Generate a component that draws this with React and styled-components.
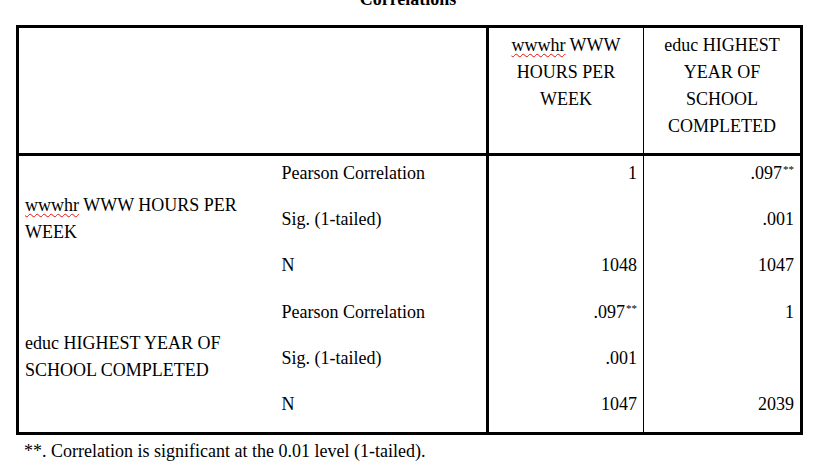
import React from 'react';
import styled, { createGlobalStyle } from 'styled-components';

const GlobalStyle = createGlobalStyle`
  html, body {
    margin: 0;
    padding: 0;
    background: #fff;
    overflow: hidden;
  }
  body {
    font-family: 'Liberation Serif', 'Times New Roman', serif;
    font-size: 18px;
    color: #000;
  }
`;

const Page = styled.div`
  width: 784px;
  margin-left: 16px;
  font-family: 'Liberation Serif', 'Times New Roman', serif;
`;

const Title = styled.div`
  margin: -11px 0 16px;
  line-height: 20px;
  font-weight: bold;
  text-align: center;
`;

const Table = styled.table`
  width: 784px;
  border-collapse: collapse;
  table-layout: fixed;
  border: 3px solid #000;
  font-family: inherit;
  font-size: 18px;
  line-height: 27px;
`;

const HeadRow = styled.tr`
  height: 128px;
`;

const BodyRow = styled.tr`
  height: 46.5px;
`;

const Cell = styled.td`
  padding: 0 6px 10px;
  vertical-align: middle;
  text-align: ${(p) => p.$align || 'left'};
  border-left: ${(p) => (p.$thickLeft ? '3px solid #000' : 'none')};
  border-right: ${(p) => (p.$thinRight ? '1px solid #000' : 'none')};
`;

const HeadCell = styled(Cell)`
  vertical-align: top;
  padding: 4px 6px 0;
  text-align: center;
  border-bottom: 3px solid #000;
`;

const LabelCell = styled(Cell)`
  padding-bottom: 12px;
`;

const SpellFlag = styled.span`
  text-decoration: underline wavy #e01010;
  text-decoration-thickness: 1px;
  text-underline-offset: 2px;
`;

const Sup = styled.sup`
  font-size: 11px;
  line-height: 0;
  vertical-align: 6px;
  margin-left: 1px;
`;

const Footnote = styled.div`
  margin: 6px 0 0 8px;
  line-height: 20px;
`;

const groups = [
  {
    label: (
      <>
        <SpellFlag>wwwhr</SpellFlag> WWW HOURS PER WEEK
      </>
    ),
    rows: [
      ['Pearson Correlation', '1', '.097', false, true],
      ['Sig. (1-tailed)', '', '.001'],
      ['N', '1048', '1047'],
    ],
  },
  {
    label: 'educ HIGHEST YEAR OF SCHOOL COMPLETED',
    rows: [
      ['Pearson Correlation', '.097', '1', true, false],
      ['Sig. (1-tailed)', '.001', ''],
      ['N', '1047', '2039'],
    ],
  },
];

export default function App() {
  return (
    <Page>
      <GlobalStyle />
      <Title>Correlations</Title>
      <Table>
        <colgroup>
          <col style={{ width: 258 }} />
          <col style={{ width: 212 }} />
          <col style={{ width: 156 }} />
          <col style={{ width: 158 }} />
        </colgroup>
        <thead>
          <HeadRow>
            <HeadCell colSpan={2} />
            <HeadCell $thickLeft $thinRight>
              <SpellFlag>wwwhr</SpellFlag> WWW HOURS PER WEEK
            </HeadCell>
            <HeadCell>educ HIGHEST YEAR OF SCHOOL COMPLETED</HeadCell>
          </HeadRow>
        </thead>
        <tbody>
          {groups.map((g, gi) =>
            g.rows.map(([stat, a, b, starA, starB], ri) => (
              <BodyRow key={`${gi}-${ri}`}>
                {ri === 0 && <LabelCell rowSpan={3}>{g.label}</LabelCell>}
                <Cell>{stat}</Cell>
                <Cell $align="right" $thickLeft $thinRight>
                  {a}
                  {starA && <Sup>**</Sup>}
                </Cell>
                <Cell $align="right">
                  {b}
                  {starB && <Sup>**</Sup>}
                </Cell>
              </BodyRow>
            ))
          )}
        </tbody>
      </Table>
      <Footnote>**. Correlation is significant at the 0.01 level (1-tailed).</Footnote>
    </Page>
  );
}
